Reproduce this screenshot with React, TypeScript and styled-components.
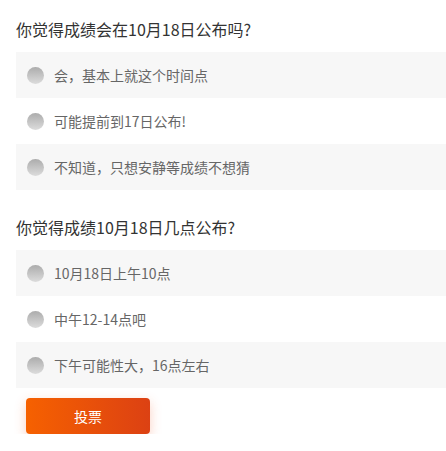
import React from "react";
import styled, { createGlobalStyle } from "styled-components";

const Global = createGlobalStyle`
  html, body { margin: 0; padding: 0; background: #fff; }
  body { font-family: "Noto Sans CJK SC", "Noto Sans", sans-serif; }
`;

const Page = styled.div`
  padding: 18px 0 0 16px;
  display: flex;
  flex-direction: column;
  gap: 26px;
`;

const Section = styled.section`
  display: flex;
  flex-direction: column;
`;

const Title = styled.div`
  font-size: 16px;
  line-height: 22px;
  color: #333;
  margin-bottom: 12px;
`;

const Option = styled.label<{ $shaded: boolean }>`
  display: flex;
  align-items: center;
  height: 46px;
  padding-left: 11px;
  gap: 10px;
  background: ${(p) => (p.$shaded ? "#f7f7f7" : "#fff")};
  cursor: pointer;
`;

const Radio = styled.span`
  width: 17px;
  height: 17px;
  border-radius: 50%;
  background: linear-gradient(180deg, #acacac 0%, #dcdcdc 100%);
  flex-shrink: 0;
`;

const OptionText = styled.span`
  font-size: 14px;
  line-height: 20px;
  color: #666;
`;

const VoteButton = styled.button`
  margin: 10px 0 0 10px;
  width: 124px;
  height: 36px;
  border: none;
  border-radius: 4px;
  background: linear-gradient(90deg, #f66100 0%, #dc4113 100%);
  box-shadow: 0 4px 12px rgba(240, 90, 40, 0.28);
  color: #fff;
  font-family: "Noto Sans CJK SC", sans-serif;
  font-size: 14px;
  font-weight: 400;
  cursor: pointer;
`;

const questions = [
  {
    title: "你觉得成绩会在10月18日公布吗?",
    options: ["会，基本上就这个时间点", "可能提前到17日公布!", "不知道，只想安静等成绩不想猜"],
  },
  {
    title: "你觉得成绩10月18日几点公布?",
    options: ["10月18日上午10点", "中午12-14点吧", "下午可能性大，16点左右"],
  },
];

export default function App() {
  return (
    <>
      <Global />
      <Page>
        {questions.map((q, qi) => (
          <Section key={qi}>
            <Title>{q.title}</Title>
            {q.options.map((o, oi) => (
              <Option key={oi} $shaded={oi % 2 === 0}>
                <Radio />
                <OptionText>{o}</OptionText>
              </Option>
            ))}
            {qi === questions.length - 1 && (
              <div>
                <VoteButton>投票</VoteButton>
              </div>
            )}
          </Section>
        ))}
      </Page>
    </>
  );
}
